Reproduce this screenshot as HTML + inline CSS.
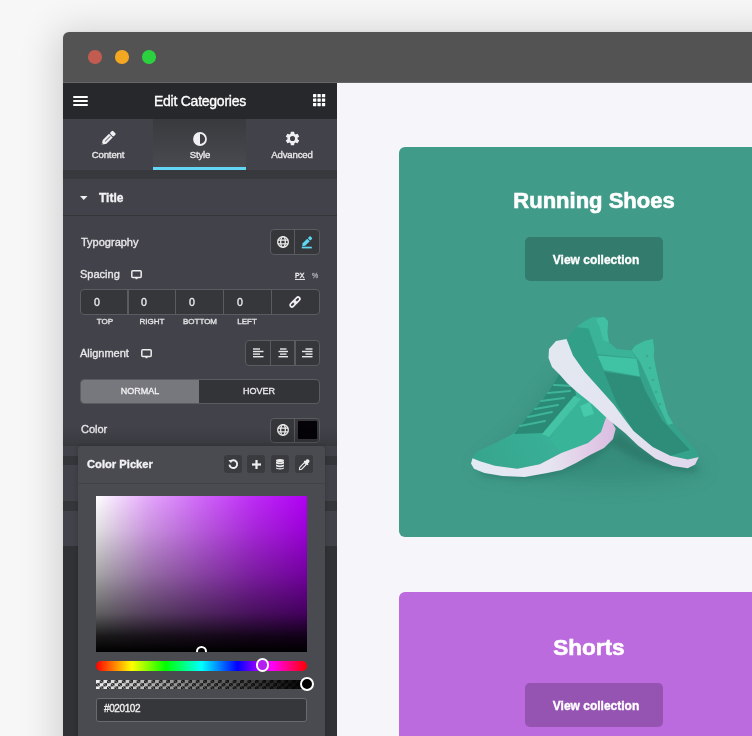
<!DOCTYPE html>
<html><head><meta charset="utf-8">
<style>
*{box-sizing:border-box;margin:0;padding:0}
html,body{width:752px;height:736px;overflow:hidden;background:#f7f7f7;font-family:"Liberation Sans",sans-serif}
.a{position:absolute}
#win{position:absolute;left:63px;top:32px;width:720px;height:740px;border-radius:6px 6px 0 0;box-shadow:0 6px 36px 8px rgba(0,0,0,0.15),0 0 3px rgba(0,0,0,0.06);background:#535353}
.dot{position:absolute;top:50.1px;width:13.7px;height:13.7px;border-radius:50%}
.t{position:absolute;white-space:nowrap;color:#e8e8ea;line-height:1;-webkit-text-stroke:0.35px currentColor;will-change:transform}
.c{transform:translateX(-50%)}
.grp{position:absolute;border:1.8px solid #5b5c61;border-radius:4px;background:#36373b}
.dv{position:absolute;top:0;bottom:0;width:1.6px;background:#5a5b60}
svg{position:absolute;overflow:visible}
</style></head><body>
<div id="win"></div>
<div class="a" style="left:63px;top:82px;width:720px;height:1px;background:#666667"></div>
<div class="dot" style="left:87.9px;background:#c25b50"></div>
<div class="dot" style="left:114.9px;background:#f4a822"></div>
<div class="dot" style="left:141.9px;background:#2bd13f"></div>

<!-- panel -->
<div class="a" style="left:63px;top:83px;width:274px;height:653px;background:#42424a"></div>
<div class="a" style="left:63px;top:83px;width:274px;height:36px;background:#27282c"></div>
<div class="a" style="left:73px;top:96px;width:15px;height:2.3px;background:#fff;border-radius:1px"></div>
<div class="a" style="left:73px;top:100.1px;width:15px;height:2.3px;background:#fff;border-radius:1px"></div>
<div class="a" style="left:73px;top:104.2px;width:15px;height:2.3px;background:#fff;border-radius:1px"></div>
<div class="t" style="left:154px;top:93.6px;font-size:14px;color:#fff;letter-spacing:-0.25px">Edit Categories</div>
<!-- grid icon -->
<svg style="left:313px;top:94.4px" width="12.2" height="12.2" viewBox="0 0 12.2 12.2" fill="#fff"><rect x="0" y="0" width="3.3" height="3.3" rx="0.4"/><rect x="4.45" y="0" width="3.3" height="3.3" rx="0.4"/><rect x="8.9" y="0" width="3.3" height="3.3" rx="0.4"/><rect x="0" y="4.45" width="3.3" height="3.3" rx="0.4"/><rect x="4.45" y="4.45" width="3.3" height="3.3" rx="0.4"/><rect x="8.9" y="4.45" width="3.3" height="3.3" rx="0.4"/><rect x="0" y="8.9" width="3.3" height="3.3" rx="0.4"/><rect x="4.45" y="8.9" width="3.3" height="3.3" rx="0.4"/><rect x="8.9" y="8.9" width="3.3" height="3.3" rx="0.4"/></svg>

<!-- tabs -->
<div class="a" style="left:153px;top:119px;width:93px;height:51px;background:linear-gradient(#393a3e,#4a4b50)"></div>
<div class="a" style="left:153px;top:167px;width:93px;height:3px;background:#62d6f4"></div>
<div class="a" style="left:63px;top:170px;width:274px;height:9px;background:#37393c"></div>
<svg style="left:98px;top:128px" width="20" height="20" viewBox="0 0 20 20"><g transform="translate(10 10.5) rotate(-45) translate(-9 -2.6)">
<path d="M0 2.6 L4.2 0 H13 V5.2 H4.2 Z" fill="#f0f0f2"/><rect x="13.9" y="0" width="4.1" height="5.2" rx="1.2" fill="#f0f0f2"/>
<rect x="4.8" y="2.2" width="7.5" height="0.8" fill="#55565b"/><path d="M0.3 2.6 L1.8 1.7 V3.5 Z" fill="#45464b"/></g></svg>
<div class="t c" style="left:108px;top:150.1px;font-size:9.6px;letter-spacing:-0.15px">Content</div>
<svg style="left:193px;top:132px" width="14" height="14" viewBox="0 0 14 14">
<circle cx="7" cy="7" r="6" fill="none" stroke="#f0f0f2" stroke-width="1.8"/>
<path d="M7 1 A6 6 0 0 0 7 13 Z" fill="#f0f0f2"/>
</svg>
<div class="t c" style="left:199.8px;top:150.1px;font-size:9.6px;letter-spacing:-0.15px">Style</div>
<svg style="left:283.5px;top:130px" width="17" height="17" viewBox="0 0 24 24">
<path fill="#f0f0f2" d="M19.14 12.94c.04-.3.06-.61.06-.94s-.02-.64-.07-.94l2.03-1.58a.49.49 0 0 0 .12-.61l-1.92-3.32a.49.49 0 0 0-.59-.22l-2.39.96c-.5-.38-1.03-.7-1.62-.94L14.4 2.81A.48.48 0 0 0 13.92 2.4h-3.84c-.24 0-.43.17-.47.41l-.36 2.54c-.59.24-1.13.57-1.62.94l-2.39-.96a.48.48 0 0 0-.59.22L2.74 8.87a.47.47 0 0 0 .12.61l2.03 1.58c-.05.3-.09.63-.09.94s.02.64.07.94l-2.03 1.58a.49.49 0 0 0-.12.61l1.92 3.32c.12.22.37.29.59.22l2.39-.96c.5.38 1.03.7 1.62.94l.36 2.54c.05.24.24.41.48.41h3.84c.24 0 .44-.17.47-.41l.36-2.54c.59-.24 1.13-.56 1.62-.94l2.39.96c.22.08.47 0 .59-.22l1.92-3.32a.47.47 0 0 0-.12-.61l-2.01-1.58zM12 15.6A3.6 3.6 0 1 1 12 8.4a3.6 3.6 0 0 1 0 7.2z"/>
</svg>
<div class="t c" style="left:291.7px;top:150.1px;font-size:9.6px;letter-spacing:-0.15px">Advanced</div>

<!-- Title section -->
<svg style="left:80px;top:196px" width="8" height="5" viewBox="0 0 8 5"><path d="M0 0 H7.5 L3.75 4 Z" fill="#f0f0f2"/></svg>
<div class="t" style="left:99px;top:191.5px;font-size:12px;font-weight:bold;color:#f2f2f4">Title</div>
<div class="a" style="left:63px;top:215px;width:274px;height:1px;background:#35363a"></div>

<div class="t" style="left:80.5px;top:237px;font-size:11px">Typography</div>
<div class="grp" style="left:270px;top:229px;width:50px;height:26px"><div class="dv" style="left:22.5px"></div></div>
<svg style="left:276.5px;top:236px" width="12" height="12" viewBox="0 0 12 12" fill="none" stroke="#eee" stroke-width="1.3">
<circle cx="6" cy="6" r="5.3"/><ellipse cx="6" cy="6" rx="2.3" ry="5.3"/><path d="M0.7 4.2 H11.3 M0.7 7.8 H11.3"/>
</svg>
<svg style="left:300px;top:234px" width="14" height="16" viewBox="0 0 14 16"><g transform="translate(6.9 7.5) rotate(-45) translate(-6.6 -1.8)" fill="#5fd9f3">
<path d="M0 1.8 L2.4 0 H8.8 V3.6 H2.4 Z"/><rect x="9.6" y="0" width="3.2" height="3.6" rx="1"/></g>
<rect x="1.8" y="12.7" width="10" height="1.7" fill="#5fd9f3"/></svg>

<div class="t" style="left:80.2px;top:269.3px;font-size:11px">Spacing</div>
<svg style="left:131px;top:269.5px" width="11" height="10" viewBox="0 0 11 10">
<rect x="0.8" y="0.8" width="9.4" height="6.6" rx="1" fill="none" stroke="#eee" stroke-width="1.5"/><rect x="4.5" y="7.6" width="2" height="1.6" fill="#eee"/>
</svg>
<div class="t" style="left:294.6px;top:272.1px;font-size:7px;color:#eee">PX</div>
<div class="a" style="left:294.6px;top:279px;width:10px;height:1px;background:#ddd"></div>
<div class="t" style="left:311.6px;top:272.1px;font-size:7px;color:#a4a5a9">%</div>

<div class="grp" style="left:80px;top:289px;width:240px;height:26px">
<div class="dv" style="left:46px"></div><div class="dv" style="left:93.5px"></div><div class="dv" style="left:141.5px"></div><div class="dv" style="left:189.5px"></div>
</div>
<div class="t" style="left:94.2px;top:296.6px;font-size:10.6px">0</div>
<div class="t" style="left:141.3px;top:296.6px;font-size:10.6px">0</div>
<div class="t" style="left:189.2px;top:296.6px;font-size:10.6px">0</div>
<div class="t" style="left:237.2px;top:296.6px;font-size:10.6px">0</div>
<svg style="left:285px;top:292px" width="20" height="20" viewBox="0 0 20 20"><g transform="translate(10 10) rotate(-45) translate(-7 -2.7)" fill="none" stroke="#f0f0f2" stroke-width="1.7">
<rect x="0.85" y="0.85" width="7" height="3.7" rx="1.85"/><rect x="6.15" y="0.85" width="7" height="3.7" rx="1.85"/></g></svg>
<div class="t c" style="left:104.5px;top:318.4px;font-size:8px;color:#e2e2e4">TOP</div>
<div class="t c" style="left:152px;top:318.4px;font-size:8px;color:#e2e2e4">RIGHT</div>
<div class="t c" style="left:199.5px;top:318.4px;font-size:8px;color:#e2e2e4">BOTTOM</div>
<div class="t c" style="left:247.3px;top:318.4px;font-size:8px;color:#e2e2e4">LEFT</div>

<div class="t" style="left:80.4px;top:348px;font-size:11px">Alignment</div>
<svg style="left:141px;top:349px" width="11" height="10" viewBox="0 0 11 10">
<rect x="0.8" y="0.8" width="9.4" height="6.6" rx="1" fill="none" stroke="#eee" stroke-width="1.5"/><rect x="4.5" y="7.6" width="2" height="1.6" fill="#eee"/>
</svg>
<div class="grp" style="left:245px;top:340px;width:75px;height:26px">
<div class="dv" style="left:23.5px"></div><div class="dv" style="left:48px"></div>
</div>
<svg style="left:252.5px;top:348px" width="11" height="10" viewBox="0 0 11 10" fill="#e8e8ea">
<rect x="0" y="0.3" width="7" height="1.4"/><rect x="0" y="2.8" width="10.5" height="1.4"/><rect x="0" y="5.4" width="7" height="1.4"/><rect x="0" y="8" width="10.5" height="1.4"/>
</svg>
<svg style="left:277.5px;top:348px" width="11" height="10" viewBox="0 0 11 10" fill="#e8e8ea">
<rect x="2" y="0.3" width="6.5" height="1.4"/><rect x="0.5" y="2.8" width="9.5" height="1.4"/><rect x="2" y="5.4" width="6.5" height="1.4"/><rect x="0.5" y="8" width="9.5" height="1.4"/>
</svg>
<svg style="left:302px;top:348px" width="11" height="10" viewBox="0 0 11 10" fill="#e8e8ea">
<rect x="3.5" y="0.3" width="7" height="1.4"/><rect x="0" y="2.8" width="10.5" height="1.4"/><rect x="3.5" y="5.4" width="7" height="1.4"/><rect x="0" y="8" width="10.5" height="1.4"/>
</svg>

<div class="grp" style="left:80px;top:379px;width:240px;height:25px;background:#333438;overflow:hidden">
<div class="a" style="left:0;top:0;width:118px;height:100%;background:#77787d"></div>
</div>
<div class="t c" style="left:140px;top:387.2px;font-size:9px;color:#f0f0f2">NORMAL</div>
<div class="t c" style="left:259.4px;top:387.2px;font-size:9px;color:#e8e8ea">HOVER</div>

<div class="t" style="left:80.7px;top:424.4px;font-size:11px">Color</div>
<div class="grp" style="left:270px;top:417.5px;width:50px;height:25px"><div class="dv" style="left:22.5px"></div></div>
<svg style="left:276.5px;top:424px" width="12" height="12" viewBox="0 0 12 12" fill="none" stroke="#eee" stroke-width="1.3">
<circle cx="6" cy="6" r="5.3"/><ellipse cx="6" cy="6" rx="2.3" ry="5.3"/><path d="M0.7 4.2 H11.3 M0.7 7.8 H11.3"/>
</svg>
<div class="a" style="left:297.5px;top:420.5px;width:19.5px;height:18.5px;background:#050308;border-radius:1px"></div>

<!-- behind popup bands -->
<div class="a" style="left:63px;top:456px;width:274px;height:9px;background:#35363a"></div>
<div class="a" style="left:63px;top:501px;width:274px;height:10px;background:#35363a"></div>
<div class="a" style="left:63px;top:546px;width:274px;height:190px;background:#303236"></div>
<div class="a" style="left:63px;top:428px;width:274px;height:18px;background:linear-gradient(rgba(0,0,0,0),rgba(0,0,0,0.14))"></div>

<!-- popup -->
<div class="a" style="left:77.5px;top:445.5px;width:247.5px;height:300px;background:#4a4b50;border-radius:4px;box-shadow:0 0 5px rgba(0,0,0,0.22)"></div>
<div class="t" style="left:87px;top:458.8px;font-size:11.2px;font-weight:bold;color:#f2f2f4">Color Picker</div>
<div class="a" style="left:223.5px;top:455px;width:18px;height:18px;background:#3a3b3f;border-radius:3px"></div>
<div class="a" style="left:247.3px;top:455px;width:18px;height:18px;background:#3a3b3f;border-radius:3px"></div>
<div class="a" style="left:271px;top:455px;width:18px;height:18px;background:#3a3b3f;border-radius:3px"></div>
<div class="a" style="left:294.7px;top:455px;width:18px;height:18px;background:#3a3b3f;border-radius:3px"></div>
<svg style="left:227.5px;top:459px" width="10" height="10" viewBox="0 0 10 10" fill="none" stroke="#eee" stroke-width="1.9">
<path d="M2.3 2.6 A3.9 3.9 0 1 1 1.4 5.6"/><path d="M0.4 1.2 L3.6 1.0 L3.2 4.2 Z" fill="#eee" stroke="none"/>
</svg>
<svg style="left:251.5px;top:459.7px" width="9" height="9" viewBox="0 0 9 9" fill="#eee"><rect x="3.4" y="0" width="2.2" height="9"/><rect x="0" y="3.4" width="9" height="2.2"/></svg>
<svg style="left:276px;top:458.5px" width="8" height="11" viewBox="0 0 8 11" fill="#eee">
<ellipse cx="4" cy="1.5" rx="4" ry="1.5"/><path d="M0 2.6 Q4 4.4 8 2.6 V4.4 Q4 6.2 0 4.4Z"/><path d="M0 5.5 Q4 7.3 8 5.5 V7.3 Q4 9.1 0 7.3Z"/><path d="M0 8.4 Q4 10.2 8 8.4 V9.5 Q4 11.3 0 9.5Z"/>
</svg>
<svg style="left:298.5px;top:458.5px" width="11" height="11" viewBox="0 0 11 11">
<path d="M7.5 0.6 Q8.7 -0.4 9.9 0.8 Q11.2 2 10.2 3.3 L8.9 4.6 L9.5 5.2 L8.5 6.2 L4.7 2.4 L5.7 1.4 L6.3 2 Z" fill="#eee"/>
<path d="M5.4 3.6 L7.3 5.5 L2.6 10.2 L0.8 10.6 L0.4 10.2 L0.8 8.3 Z" fill="none" stroke="#eee" stroke-width="1.1"/>
</svg>
<div class="a" style="left:77.5px;top:483px;width:247.5px;height:1px;background:#424348"></div>

<!-- gradient -->
<div class="a" style="left:96px;top:496px;width:210.5px;height:156px;background:linear-gradient(to top,#000 0%,rgba(0,0,0,0.9) 10%,rgba(0,0,0,0.62) 25%,rgba(0,0,0,0.35) 50%,rgba(0,0,0,0.12) 78%,rgba(0,0,0,0) 100%),linear-gradient(to right,#fff 0%,rgba(255,255,255,0.65) 25%,rgba(255,255,255,0.4) 50%,rgba(255,255,255,0.17) 75%,rgba(255,255,255,0) 100%),#b000f4"></div>
<div class="a" style="left:96px;top:652px;width:210.5px;height:10px;background:#4a4b50"></div>
<div class="a" style="left:196px;top:645.5px;width:11px;height:11px;border:2px solid #fff;border-radius:50%"></div>
<div class="a" style="left:96px;top:652px;width:210.5px;height:9px;background:#4a4b50"></div>
<div class="a" style="left:96px;top:661px;width:210.5px;height:10px;border-radius:5px;background:linear-gradient(to right,#f00 0%,#ff0 17%,#0f0 33%,#0ff 50%,#00f 67%,#f0f 83%,#f00 100%)"></div>
<div class="a" style="left:255.5px;top:658.4px;width:13.5px;height:13.5px;border:2px solid #fff;border-radius:50%;background:#b41ff0"></div>
<div class="a" style="left:96px;top:679.5px;width:210.5px;height:9.5px;background-color:#f0f0f0;background-image:linear-gradient(45deg,#2c2c2e 25%,transparent 25%,transparent 75%,#2c2c2e 75%),linear-gradient(45deg,#2c2c2e 25%,transparent 25%,transparent 75%,#2c2c2e 75%);background-size:7.4px 6.4px;background-position:0 0,3.7px 3.2px"></div>
<div class="a" style="left:96px;top:679.5px;width:210.5px;height:9.5px;background:linear-gradient(to right,rgba(2,1,2,0),#020102)"></div>
<div class="a" style="left:299.8px;top:676.5px;width:14px;height:14px;border:2px solid #fff;border-radius:50%;background:#020102"></div>
<div class="a" style="left:96px;top:697.5px;width:210.5px;height:24px;border:1.5px solid #6a6b70;border-radius:3px;background:#36373b"></div>
<div class="t" style="left:103.5px;top:703.8px;font-size:10px;color:#eee;letter-spacing:-0.4px">#020102</div>

<!-- preview -->
<div class="a" style="left:337px;top:83px;width:415px;height:653px;background:#f6f6fa"></div>
<div class="a" style="left:399px;top:147px;width:390px;height:390px;background:#419b89;border-radius:6px"></div>
<svg style="left:0;top:0" width="752" height="736" viewBox="0 0 752 736">
<defs>
<filter id="blS" x="-50%" y="-50%" width="200%" height="200%"><feGaussianBlur stdDeviation="10"/></filter>
<filter id="blM" x="-20%" y="-20%" width="140%" height="140%"><feGaussianBlur stdDeviation="3"/></filter>
<filter id="blT" x="-10%" y="-10%" width="120%" height="120%"><feGaussianBlur stdDeviation="0.45"/></filter>
<linearGradient id="soleF" x1="471" y1="0" x2="616" y2="0" gradientUnits="userSpaceOnUse">
<stop offset="0" stop-color="#e2eaf2"/><stop offset="0.55" stop-color="#e6e4f0"/><stop offset="0.85" stop-color="#e0c8e6"/><stop offset="1" stop-color="#d9bde0"/>
</linearGradient>
<linearGradient id="soleB" x1="550" y1="340" x2="700" y2="468" gradientUnits="userSpaceOnUse">
<stop offset="0" stop-color="#e2e8f0"/><stop offset="0.6" stop-color="#e4e4f0"/><stop offset="1" stop-color="#e0d6ec"/>
</linearGradient>
<linearGradient id="vampF" x1="471" y1="470" x2="560" y2="420" gradientUnits="userSpaceOnUse">
<stop offset="0" stop-color="#36a48d"/><stop offset="1" stop-color="#3ab299"/>
</linearGradient>
</defs>
<!-- shadows -->
<g filter="url(#blS)" fill="#2c7c6b" opacity="0.45">
<path d="M475 468 Q520 440 545 395 L575 360 L610 395 L660 440 L705 470 Q640 490 560 480 Z"/>
</g>
<g filter="url(#blM)" fill="#286e60" opacity="0.55">
<path d="M480 474 Q540 488 595 458 L612 445 Q650 472 700 472 L690 460 Q650 462 620 432 L575 462 Q520 478 482 468 Z"/>
</g>
<g filter="url(#blT)">
<!-- front shoe upper -->
<path d="M471 461 L473.2 456 L477 451.5 L494.9 443.2 L509.8 435.8 L517.3 429.8 L527.8 416.3 L539.7 402.9 L548.7 390.9 L555.9 379.8 L560 372 L575 385 L600 405 L609.1 416.7 L605.9 417.8 L601 432 L588 443 L561.3 453 L539.7 464.2 L517.3 468.7 L494.9 465.7 L480 461.2 L472.5 458.2 Z" fill="url(#vampF)"/>
<!-- front laces darker -->
<path d="M514 434 L527.8 416.3 L539.7 402.9 L548.7 390.9 L555.9 379.8 L560 372 L575 385 L576 395 L544 433 Z" fill="#2a8a76"/>
<g stroke="#3fb499" stroke-width="1.9" fill="none" stroke-linecap="round">
<path d="M520 426 L545 421"/><path d="M528 417 L552 412"/><path d="M535 409 L558 405"/><path d="M541 401 L564 398"/><path d="M548 393 L570 391"/><path d="M554 385 L574 386"/>
</g>
<!-- front heel side -->
<path d="M576 395 L575 385 L600 405 L609.1 416.7 L605.9 417.8 L601 432 L588 443 L561.3 453 L550 440 Z" fill="#39b499"/>
<path d="M542 434 L574 396 L581 399 L549 437 Z" fill="#44c3a5"/>
<path d="M580 406 L590 402 L594 414 L584 417 Z" fill="#46c9ab"/>
<!-- front sole -->
<path d="M472.5 458.2 L480 461.2 L494.9 465.7 L517.3 468.7 L539.7 464.2 L561.3 453 L588 443 L601 432 L605.9 417.8 L609.1 416.7 L615.7 428.7 L613 439 L604 448 L590 455 L576 463 L561.7 470 L547.2 473.1 L524.8 476.9 L502.4 476.1 L484.4 473.1 L474 468.7 L471 463.4 Z" fill="url(#soleF)"/>

<!-- back shoe upper base -->
<path d="M566.5 339.1 L576.3 326.9 L584.5 321.2 L592.6 317.1 L604 317.1 L608.1 321.2 L607.3 332.6 L608.9 342.4 L617.1 348.9 L631.7 350.5 L635 345.7 L644.8 340.8 L653 339.1 L654.2 348.9 L653.8 357.1 L656.2 370.1 L661.1 391.3 L667.6 414.1 L673.1 423.6 L687.8 441.2 L696.5 451.4 L698.7 457.3 L698 457.3 L687.8 459.5 L670.2 455.8 L652.7 447 L633.6 431 L625.2 420 L613.8 404.4 L599.1 388 L584.5 371.7 L573 355.4 Z" fill="#35a38b"/>
<!-- heel counter -->
<path d="M566.5 339.1 L576.3 326.9 L588.5 328.5 L597.5 353.8 L605.7 371.7 L617.1 404.4 L622 416 L613.8 404.4 L599.1 388 L584.5 371.7 L573 355.4 Z" fill="#33a089"/>
<!-- collar padding -->
<path d="M576.3 326.9 L584.5 321.2 L592.6 317.1 L604 317.1 L608.1 321.2 L607.3 332.6 L608.9 342.4 L617.1 348.9 L631.7 350.5 L636 358 L597.5 354 L588.5 328.5 Z" fill="#3ab398"/>
<path d="M596 319 L604 317.1 L608.1 321.2 L607.3 332.6 L608.9 342.4 L603 340 L600 328 Z" fill="#42c0a4"/>
<!-- light stripe -->
<path d="M597.5 355.4 L636.6 358.7 L639.9 376.6 L604 370.1 Z" fill="#3fc2a4"/>
<!-- mesh -->
<path d="M604 371.7 L640 377 L646 392 L662 420 L690 450 L670.2 455.8 L652.7 447 L633.6 431 L617.1 404.4 Z" fill="#2d8d79"/>
<!-- lace strip -->
<path d="M631.7 350.5 L635 345.7 L644.8 340.8 L653 339.1 L654.2 348.9 L653.8 357.1 L656.2 370.1 L661.1 391.3 L667.6 414.1 L673.1 423.6 L668 425 L658 404 L648 380 L640 362 Z" fill="#41bc9f"/>
<g fill="#3aa88f"><circle cx="647" cy="356" r="1.3"/><circle cx="650" cy="368" r="1.3"/><circle cx="653" cy="380" r="1.3"/><circle cx="656" cy="392" r="1.3"/><circle cx="660" cy="404" r="1.3"/></g>
<!-- back sole -->
<path d="M566.5 339.1 L556 341 L549 349 L548.5 358 L552 367 L560 375 L567 383 L577.6 392.5 L592.6 404.4 L608.9 420 L625 433 L638 445.6 L655.6 458.8 L673.1 466.1 L687.8 468.3 L695.1 464.6 L698.7 457.3 L698 457.3 L687.8 459.5 L670.2 455.8 L652.7 447 L633.6 431 L625.2 420 L613.8 404.4 L599.1 388 L584.5 371.7 L573 355.4 Z" fill="url(#soleB)"/>
</g>
</svg>

<div class="t c" style="left:594px;top:190.4px;font-size:22px;font-weight:bold;color:#fff;-webkit-text-stroke:0.6px #fff">Running Shoes</div>
<div class="a" style="left:525px;top:237px;width:137.5px;height:43.5px;background:#327b6d;border-radius:5px"></div>
<div class="t c" style="left:595.5px;top:253.9px;font-size:12px;font-weight:bold;color:#fff;-webkit-text-stroke:0.35px #fff">View collection</div>

<div class="a" style="left:399px;top:592px;width:390px;height:390px;background:#bb6bde;border-radius:6px"></div>
<div class="t c" style="left:588.5px;top:636.5px;font-size:22.5px;font-weight:bold;color:#fff;-webkit-text-stroke:0.6px #fff">Shorts</div>
<div class="a" style="left:525px;top:683px;width:137.5px;height:43.5px;background:#9553b2;border-radius:5px"></div>
<div class="t c" style="left:595.5px;top:699.8px;font-size:12px;font-weight:bold;color:#fff;-webkit-text-stroke:0.35px #fff">View collection</div>
</body></html>
